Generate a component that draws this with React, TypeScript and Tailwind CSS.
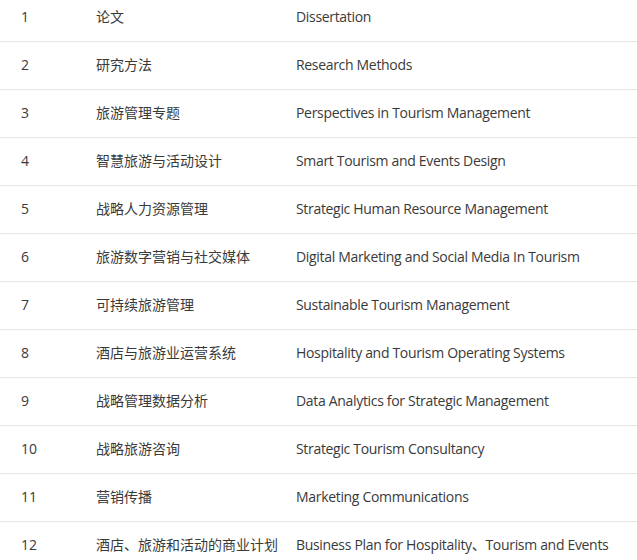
const courses: [string, string][] = [
  ["论文", "Dissertation"],
  ["研究方法", "Research Methods"],
  ["旅游管理专题", "Perspectives in Tourism Management"],
  ["智慧旅游与活动设计", "Smart Tourism and Events Design"],
  ["战略人力资源管理", "Strategic Human Resource Management"],
  ["旅游数字营销与社交媒体", "Digital Marketing and Social Media In Tourism"],
  ["可持续旅游管理", "Sustainable Tourism Management"],
  ["酒店与旅游业运营系统", "Hospitality and Tourism Operating Systems"],
  ["战略管理数据分析", "Data Analytics for Strategic Management"],
  ["战略旅游咨询", "Strategic Tourism Consultancy"],
  ["营销传播", "Marketing Communications"],
  ["酒店、旅游和活动的商业计划", "Business Plan for Hospitality、Tourism and Events"],
];

export default function App() {
  return (
    <div className="h-[560px] w-[637px] overflow-hidden bg-white font-['Open_Sans','Noto_Sans_CJK_SC',sans-serif] text-[14px] text-[#3a3a3a]">
      <div className="-mt-[6px]">
        {courses.map(([zh, en], i) => (
          <div key={i} className="flex h-[48px] items-center border-b border-[#e6e6e6] pb-[2px]">
            <span className="w-[96px] pl-[21px]">{i + 1}</span>
            <span className="w-[200px] whitespace-nowrap">{zh}</span>
            <span className="whitespace-nowrap tracking-[-0.32px]">{en}</span>
          </div>
        ))}
      </div>
    </div>
  );
}
